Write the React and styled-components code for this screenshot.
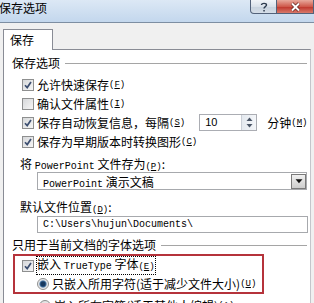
import React from "react";
import styled, {createGlobalStyle} from "styled-components";

const GlobalStyle = createGlobalStyle`
  html, body { margin: 0; padding: 0; }
  body {
    width: 314px;
    height: 303px;
    overflow: hidden;
    background: #f0f0f0;
    font-family: "Noto Sans CJK SC", "Liberation Sans", sans-serif;
    font-size: 12px;
    color: #000;
  }
`

const Window = styled.div`
  width: 314px;
  height: 303px;
  overflow: hidden;
  display: flex;
  flex-direction: column;
  background: #f0f0f0;
`

const TitleBar = styled.div`
  flex: none;
  height: 22px;
  display: flex;
  justify-content: space-between;
  align-items: flex-start;
  background: linear-gradient(#dce8f5, #c3d7ed);
  border-bottom: 1px solid #7d8ea2;
`

const Title = styled.span`
  margin: 1px 0 0 -1px;
  font-size: 12px;
  line-height: 14px;
`

const Controls = styled.div`
  display: flex;
`

const CaptionBtn = styled.div`
  box-sizing: border-box;
  width: ${p => p.$w}px;
  height: 14px;
  border: 1px solid #53627a;
  border-top: none;
  border-left: ${p => p.$close ? "none" : "1px solid #53627a"};
  border-radius: ${p => p.$close ? "0" : "0 0 0 4px"};
  background: ${p => p.$close
    ? "linear-gradient(#e8a99c, #cf5a4c 50%, #c0392e 55%, #d8796b)"
    : "linear-gradient(#f1f4f8, #d9e1ea 50%, #c8d3df 55%, #d5dde7)"};
  display: flex;
  align-items: center;
  justify-content: center;
`

const TabStrip = styled.div`
  flex: none;
  height: 26px;
  display: flex;
  align-items: flex-end;
  padding-left: 3px;
`

const Tab = styled.div`
  position: relative;
  z-index: 1;
  box-sizing: border-box;
  width: 50px;
  height: 21px;
  margin-bottom: -1px;
  padding: 3px 0 0 6px;
  background: #fff;
  border: 1px solid #898c95;
  border-bottom: none;
  line-height: 14px;
`

const Panel = styled.div`
  flex: 1;
  box-sizing: border-box;
  width: 308px;
  margin-left: 3px;
  background: #fff;
  border: 1px solid #898c95;
  border-right-color: #c4c6cb;
  border-bottom: none;
  display: flex;
  flex-direction: column;
`

const GroupHead = styled.div`
  height: 14px;
  margin: ${p => p.$top}px 3px 0 8px;
  display: flex;
  align-items: center;
  gap: 5px;
  line-height: 14px;
  white-space: nowrap;
`

const GroupLine = styled.span`
  flex: 1;
  height: 1px;
  background: #a5a5a5;
`

const Row = styled.div`
  height: ${p => p.$h || 19}px;
  margin-top: ${p => p.$top || 0}px;
  padding-left: ${p => p.$indent}px;
  display: flex;
  align-items: center;
  line-height: 14px;
  white-space: nowrap;
`

const Mono = styled.span`
  font-family: "Liberation Mono", monospace;
  font-size: ${p => p.$size || 10}px;
`

const Under = styled.span`
  text-decoration: underline;
`

const Box = styled.span`
  flex: none;
  box-sizing: border-box;
  width: 12px;
  height: 12px;
  margin-right: 3px;
  border: 1px solid #8e8f8f;
  background: linear-gradient(135deg, #d6d8da, #f6f6f6);
  display: flex;
  align-items: center;
  justify-content: center;
`

const RadioDot = styled.span`
  flex: none;
  box-sizing: border-box;
  width: 12px;
  height: 12px;
  margin-right: 3px;
  border-radius: 50%;
  border: 1px solid #8e8f8f;
  background: ${p => p.$on
    ? "radial-gradient(circle, #17385e 0 2px, #3f6d9c 3px, #d8dde2 4px, #f2f2f2 5px)"
    : "linear-gradient(135deg, #dcdcdc, #f7f7f7)"};
`

const Focus = styled.span`
  outline: 1px dotted #000;
`

const Spin = styled.div`
  box-sizing: border-box;
  width: 58px;
  height: 17px;
  margin: 0 10px 0 14px;
  border: 1px solid #abadb3;
  display: flex;
  font-family: "Liberation Sans", sans-serif;
  font-size: 11px;
`

const SpinText = styled.span`
  flex: 1;
  padding-left: 5px;
  line-height: 15px;
`

const SpinBtns = styled.div`
  width: 14px;
  border-left: 1px solid #c9ced6;
  background: linear-gradient(90deg, #e4e9ef, #f4f6f9);
  display: flex;
  flex-direction: column;
  align-items: center;
  justify-content: space-around;
`

const Label = styled.div`
  height: 14px;
  margin-top: ${p => p.$top}px;
  padding-left: 16px;
  line-height: 14px;
  white-space: nowrap;
`

const Field = styled.div`
  box-sizing: border-box;
  height: ${p => p.$h}px;
  margin: ${p => p.$top}px ${p => p.$right}px 0 33px;
  border: 1px solid #a7a9ad;
  display: flex;
  align-items: center;
  padding-left: 5px;
  white-space: nowrap;
`

const FieldText = styled.span`
  flex: 1;
`

const DropBtn = styled.span`
  box-sizing: border-box;
  width: 15px;
  height: 15px;
  border: 1px solid #7a7a7a;
  background: linear-gradient(#f0f0f0, #cdcdcd);
  display: flex;
  align-items: center;
  justify-content: center;
`

const RedBox = styled.div`
  box-sizing: border-box;
  width: 251px;
  height: 40px;
  margin: 2px 0 0 9px;
  border: 2px solid #b5333b;
  display: flex;
  flex-direction: column;
`

function Key({k}) {
    return <Mono $size={9}>(<Under>{k}</Under>)</Mono>
}

function Check({on}) {
    return (
        <Box>
            {on && (
                <svg width="8" height="8" viewBox="0 0 8 8">
                    <path d="M1 4.2 L3.2 6.6 L7 1" fill="none" stroke="#3c4e70" strokeWidth="1.7"/>
                </svg>
            )}
        </Box>
    )
}

function Tri({up, size = 5, color = "#4a5566"}) {
    return (
        <svg width={size + 2} height={size - 1} viewBox="0 0 7 4">
            <path d={up ? "M0.5 4 L3.5 0.5 L6.5 4 Z" : "M0.5 0 L3.5 3.5 L6.5 0 Z"} fill={color}/>
        </svg>
    )
}

export default function App() {
    return (<>
        <GlobalStyle/>
        <Window>
            <TitleBar>
                <Title>保存选项</Title>
                <Controls>
                    <CaptionBtn $w={27}>
                        <svg width="8" height="10" viewBox="0 0 8 10">
                            <path d="M1.5 3 C1.5 0.8 6.5 0.8 6.5 3 C6.5 4.6 4 4.6 4 6.6" fill="none" stroke="#2e3b4e" strokeWidth="1.4"/>
                            <rect x="3.3" y="8" width="1.5" height="1.5" fill="#2e3b4e"/>
                        </svg>
                    </CaptionBtn>
                    <CaptionBtn $w={37} $close>
                        <svg width="11" height="10" viewBox="0 0 11 10">
                            <path d="M2 1.5 L9 8.5 M9 1.5 L2 8.5" stroke="#5a1d17" strokeWidth="3.2"/>
                            <path d="M2 1.5 L9 8.5 M9 1.5 L2 8.5" stroke="#fff" strokeWidth="2"/>
                        </svg>
                    </CaptionBtn>
                </Controls>
            </TitleBar>
            <TabStrip>
                <Tab>保存</Tab>
            </TabStrip>
            <Panel>
                <GroupHead $top={6}>保存选项<GroupLine/></GroupHead>
                <Row $indent={18} $top={5}><Check on/>允许快速保存<Key k="F"/></Row>
                <Row $indent={18}><Check/>确认文件属性<Key k="I"/></Row>
                <Row $indent={18}>
                    <Check on/>保存自动恢复信息，每隔<Key k="S"/>
                    <Spin>
                        <SpinText>10</SpinText>
                        <SpinBtns><Tri up size={5}/><Tri size={5}/></SpinBtns>
                    </Spin>
                    分钟<Key k="M"/>
                </Row>
                <Row $indent={18}><Check on/>保存为早期版本时转换图形<Key k="C"/></Row>
                <Label $top={6}>将 <Mono>PowerPoint</Mono> 文件存为<Key k="P"/>:</Label>
                <Field $h={18} $top={1} $right={3}>
                    <FieldText><Mono>PowerPoint</Mono> 演示文稿</FieldText>
                    <DropBtn><Tri size={6} color="#111"/></DropBtn>
                </Field>
                <Label $top={10}>默认文件位置<Key k="D"/>:</Label>
                <Field $h={17} $top={2} $right={2}>
                    <Mono>C:\Users\hujun\Documents\</Mono>
                </Field>
                <GroupHead $top={5}>只用于当前文档的字体选项<GroupLine/></GroupHead>
                <RedBox>
                    <Row $indent={7} $h={19}>
                        <Check on/><Focus>嵌入 <Mono>TrueType</Mono> 字体<Key k="E"/></Focus>
                    </Row>
                    <Row $indent={22} $h={17}>
                        <RadioDot $on/>只嵌入所用字符(适于减少文件大小)<Key k="U"/>
                    </Row>
                </RedBox>
                <Row $indent={35} $top={2}>
                    <RadioDot/>嵌入所有字符(适于其他人编辑)<Key k="A"/>
                </Row>
            </Panel>
        </Window>
    </>);
}
